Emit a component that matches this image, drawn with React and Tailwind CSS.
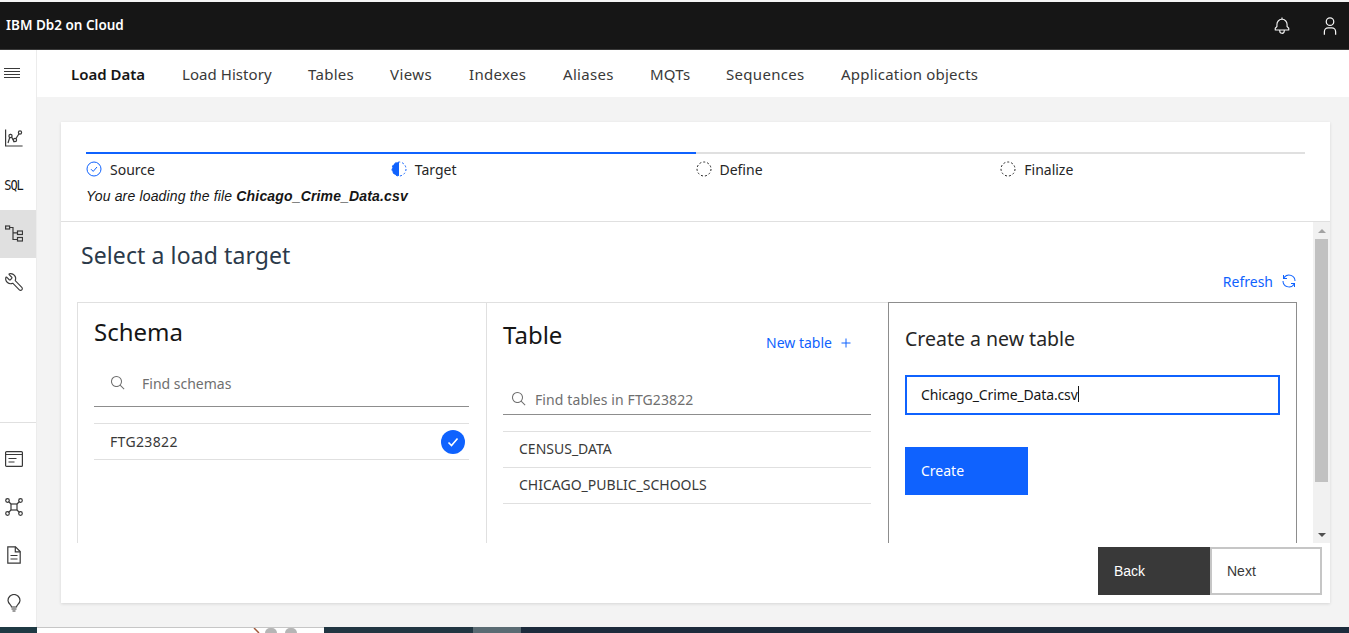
import { Wrench } from "lucide-react";

const font = { fontFamily: '"Noto Sans", "Liberation Sans", sans-serif' };
const arial = { fontFamily: '"Liberation Sans", sans-serif' };

const SideItem = ({ children, active }) => (
  <div className={`h-12 flex items-center justify-center pr-[9px] text-[#393939] ${active ? "bg-[#e0e0e0]" : ""}`}>{children}</div>
);

const Step = ({ icon, label }) => (
  <div className="flex-1 flex items-center gap-[8px] h-[30px] text-[14px] text-[#262626]">
    {icon}
    <span>{label}</span>
  </div>
);

const Dashed = () => (
  <svg width="16" height="16" viewBox="0 0 16 16">
    <circle cx="8" cy="8" r="7" fill="none" stroke="#262626" strokeWidth="1" strokeDasharray="2 2" />
  </svg>
);

const Search = () => (
  <svg width="16" height="16" viewBox="0 0 32 32" fill="#6f6f6f">
    <path d="M29,27.5859l-7.5521-7.5521a11.0177,11.0177,0,1,0-1.4141,1.4141L27.5859,29ZM4,13a9,9,0,1,1,9,9A9.01,9.01,0,0,1,4,13Z" />
  </svg>
);

const tabs = [
  { label: "Load History", width: "w-[90px] tracking-[0.05px]" },
  { label: "Tables", width: "w-[46px] tracking-[0.3px]" },
  { label: "Views", width: "w-[43px] tracking-[0.4px]" },
  { label: "Indexes", width: "w-[58px] tracking-[0.3px]" },
  { label: "Aliases", width: "w-[51px] tracking-[0.3px]" },
  { label: "MQTs", width: "w-[40px] tracking-[0.2px]" },
  { label: "Sequences", width: "w-[79px] tracking-[0.3px]" },
  { label: "Application objects", width: "w-[137px] tracking-[0.2px]" },
];

export default function App() {
  return (
    <div style={font} className="w-[1349px] h-[633px] overflow-hidden flex flex-col bg-[#f3f3f3]">
      <div className="h-[2px] bg-[#f4f4f4] shrink-0" />
      <header className="h-[48px] shrink-0 bg-[#161616] border-b border-[#393939] flex items-center pl-[6px] text-white">
        <span className="text-[13.5px] font-semibold">IBM Db2 on Cloud</span>
        <div className="ml-auto flex items-center gap-[29px] pr-[9px] text-[#f4f4f4]">
          <svg width="18" height="18" viewBox="0 0 32 32" fill="currentColor">
            <path d="M28.7071,19.293,26,16.5859V13a10.0136,10.0136,0,0,0-9-9.9492V1H15V3.0508A10.0136,10.0136,0,0,0,6,13v3.5859L3.2929,19.293A1,1,0,0,0,3,20v3a1,1,0,0,0,1,1h7v.7768a5.152,5.152,0,0,0,4.5,5.1987A5.0057,5.0057,0,0,0,21,25V24h7a1,1,0,0,0,1-1V20A1,1,0,0,0,28.7071,19.293ZM19,25a3,3,0,0,1-6,0V24h6Zm8-3H5V20.4141L7.707,17.707A1,1,0,0,0,8,17V13a8,8,0,0,1,16,0v4a1,1,0,0,0,.293.707L27,20.4141Z" />
          </svg>
          <svg width="20" height="20" viewBox="0 0 32 32" fill="currentColor">
            <path d="M16,4a5,5,0,1,1-5,5,5,5,0,0,1,5-5m0-2a7,7,0,1,0,7,7A7,7,0,0,0,16,2Z" />
            <path d="M26,30H24V25a5,5,0,0,0-5-5H13a5,5,0,0,0-5,5v5H6V25a7,7,0,0,1,7-7h6a7,7,0,0,1,7,7Z" />
          </svg>
        </div>
      </header>

      <div className="flex-1 min-h-0 flex">
        <aside className="w-[37px] shrink-0 bg-white border-r border-[#ececec] flex flex-col">
          <div className="h-[47px] flex items-center pl-[4px] text-[#393939]">
            <svg width="16" height="12" viewBox="0 0 16 12" stroke="currentColor" strokeWidth="1"><path d="M0 .5h16M0 3.500h16M0 6.500h16M0 9.500h16" /></svg>
          </div>
          <div className="h-[17px]" />
          <SideItem>
            <svg width="18" height="18" viewBox="0 0 18 18" fill="none" stroke="currentColor" strokeWidth="1.200">
              <path d="M.6 .5v16.500h17" />
              <path d="M3 14 5.500 6l3.500 6.500L14.500 4" />
              <circle cx="5.500" cy="7" r="1.600" fill="white" /><circle cx="10" cy="11" r="1.600" fill="white" /><circle cx="15" cy="3.500" r="1.600" fill="white" />
            </svg>
          </SideItem>
          <SideItem>
            <span className="text-[12px] font-normal tracking-[-1px] text-[#161616] scale-y-110" style={{ fontFamily: '"DejaVu Sans Mono", monospace' }}>SQL</span>
          </SideItem>
          <SideItem active>
            <svg width="18" height="18" viewBox="0 0 18 18" fill="none" stroke="currentColor" strokeWidth="1.200">
              <rect x=".6" y="1" width="4" height="3" /><rect x="12.500" y="6" width="5" height="3.500" /><rect x="12.500" y="12.500" width="5" height="3.500" />
              <path d="M4.500 2.500h3.500v12h4.500M8 7.800h4.500" />
            </svg>
          </SideItem>
          <SideItem>
            <Wrench size={20} strokeWidth={1.300} className="-scale-x-100" />
          </SideItem>
          <div className="h-[116px]" />
          <div className="h-[13px] border-t border-[#e0e0e0]" />
          <SideItem>
            <svg width="18" height="16" viewBox="0 0 18 16" fill="none" stroke="currentColor" strokeWidth="1.200">
              <rect x=".6" y=".6" width="16.800" height="14.800" rx="1" /><path d="M.6 3.500h16.800M3.500 7.500h8M3.500 11h6" />
            </svg>
          </SideItem>
          <SideItem>
            <svg width="18" height="18" viewBox="0 0 18 18" fill="none" stroke="currentColor" strokeWidth="1.200">
              <rect x="6" y="6" width="6" height="6" />
              <path d="M6 6 3.500 3.500M12 6l2.500-2.500M6 12l-2.500 2.500M12 12l2.500 2.500" />
              <circle cx="2.500" cy="2.500" r="1.800" /><circle cx="15.500" cy="2.500" r="1.800" /><circle cx="2.500" cy="15.500" r="1.800" /><circle cx="15.500" cy="15.500" r="1.800" />
            </svg>
          </SideItem>
          <SideItem>
            <svg width="14" height="18" viewBox="0 0 14 18" fill="none" stroke="currentColor" strokeWidth="1.200">
              <path d="M.8 .8h7.700l4.700 4.700v11.700H.8Z" /><path d="M8.300 .8v5h4.900M3.500 9.500h7M3.500 13h7" />
            </svg>
          </SideItem>
          <SideItem>
            <svg width="14" height="18" viewBox="0 0 14 18" fill="none" stroke="currentColor" strokeWidth="1.200">
              <path d="M4.500 13c0-2-3.500-3.500-3.500-6.500a6 6 0 0 1 12 0c0 3-3.500 4.500-3.500 6.500Z" /><path d="M4.500 15h5M5.500 17h3" />
            </svg>
          </SideItem>
        </aside>

        <main className="flex-1 min-w-0 flex flex-col">
          <nav className="h-[47px] shrink-0 bg-white flex items-center pt-[2px] pl-[34px] gap-[36px] text-[15px] text-[#393939] whitespace-nowrap">
            <span className="w-[75px] font-semibold text-[#161616]">Load Data</span>
            {tabs.map((t) => <span key={t.label} className={t.width}>{t.label}</span>)}
          </nav>

          <section className="ml-[24px] mt-[25px] w-[1269px] h-[481px] bg-white shadow-[0_1px_3px_rgba(0,0,0,0.12)] flex flex-col">
            <div className="h-[100px] shrink-0 border-b border-[#e0e0e0] px-[25px] pt-[30px]">
              <div className="h-[2px] bg-[#e0e0e0] flex"><div className="w-[610px] bg-[#0f62fe]" /></div>
              <div className="flex">
                <Step label="Source" icon={
                  <svg width="16" height="16" viewBox="0 0 16 16" fill="none" stroke="#0f62fe"><circle cx="8" cy="8" r="7" /><path d="m5 8.200 2.200 2.200L11 6" /></svg>
                } />
                <Step label="Target" icon={
                  <svg width="16" height="16" viewBox="0 0 16 16"><path d="M8 1a7 7 0 0 0 0 14Z" fill="#0f62fe" /><circle cx="8" cy="8" r="7" fill="none" stroke="#0f62fe" strokeDasharray="2 2" /></svg>
                } />
                <Step label="Define" icon={<Dashed />} />
                <Step label="Finalize" icon={<Dashed />} />
              </div>
              <p className="mt-[3px] text-[14px] italic tracking-[0.16px] text-[#161616] leading-[18px]" style={arial}>
                You are loading the file <b>Chicago_Crime_Data.csv</b>
              </p>
            </div>

            <div className="h-[321px] shrink-0 flex overflow-hidden">
              <div className="flex-1 min-w-0 px-[16px] flex flex-col">
                <h2 className="pl-[4px] mt-[15px] h-[36px] leading-[36px] text-[23px] tracking-[0.1px] text-[#2b3a4a]">Select a load target</h2>
                <div className="mt-[-2px] h-[20px] flex items-center justify-end gap-[8px] text-[#0f62fe] text-[14px]">
                  <span>Refresh</span>
                  <svg width="16" height="16" viewBox="0 0 32 32" fill="currentColor">
                    <path d="M12 10H6.780A11 11 0 0 1 27 16h2A13 13 0 0 0 6 7.680V4H4v8h8zM20 22h5.220A11 11 0 0 1 5 16H3a13 13 0 0 0 23 8.320V28h2V20H20z" />
                  </svg>
                </div>
                <div className="mt-[11px] flex-1 min-h-0 flex w-[1220px]">
                  <div className="w-[410px] shrink-0 border border-b-0 border-[#e0e0e0] pl-[16px] pr-[17px] pt-[14px]">
                    <h3 className="text-[24px] leading-[30px] text-[#161616]">Schema</h3>
                    <div className="mt-[15px] h-[45px] pb-[2px] border-b border-[#8d8d8d] flex items-center pl-[16px] gap-[16px] text-[14px] text-[#6f6f6f]">
                      <Search /><span>Find schemas</span>
                    </div>
                    <div className="mt-[16px] h-[37px] border-y border-[#e0e0e0] flex items-center justify-between pl-[16px] pr-[4px] text-[14px] text-[#393939]">
                      <span className="tracking-[0.35px]">FTG23822</span>
                      <div className="w-[24px] h-[24px] rounded-full bg-[#0f62fe] flex items-center justify-center">
                        <svg width="12" height="12" viewBox="0 0 12 12" fill="none" stroke="white" strokeWidth="1.600"><path d="m1.500 6.500 3 3 6-7" /></svg>
                      </div>
                    </div>
                  </div>
                  <div className="w-[401px] shrink-0 border-t border-[#e0e0e0] px-[16px] pt-[17px]">
                    <div className="flex items-start justify-between pr-[20px] w-[368px]">
                      <h3 className="text-[24px] leading-[30px] text-[#161616]">Table</h3>
                      <div className="mt-[12px] flex items-center gap-[9px] text-[14px] text-[#0f62fe]">
                        <span>New table</span>
                        <svg width="10" height="10" viewBox="0 0 10 10" stroke="currentColor"><path d="M5 .5v9M.5 5h9" /></svg>
                      </div>
                    </div>
                    <div className="mt-[29px] w-[368px] h-[33px] pt-[2px] border-b border-[#8d8d8d] flex items-center pl-[8px] gap-[8px] text-[14px] tracking-[0.1px] text-[#6f6f6f]">
                      <Search /><span>Find tables in FTG23822</span>
                    </div>
                    <div className="mt-[16px] w-[368px] border-t border-[#e0e0e0] text-[14px] text-[#393939]">
                      <div className="h-[36px] pb-[2px] border-b border-[#e0e0e0] flex items-center pl-[16px]">CENSUS_DATA</div>
                      <div className="h-[36px] pb-[2px] border-b border-[#e0e0e0] flex items-center pl-[16px]">CHICAGO_PUBLIC_SCHOOLS</div>
                    </div>
                  </div>
                  <div className="w-[409px] shrink-0 border border-b-0 border-[#8d8d8d] pl-[16px] pt-[23px]">
                    <h3 className="text-[19.5px] leading-[26px] text-[#262626]">Create a new table</h3>
                    <div className="mt-[23px] w-[375px] h-[40px] pb-[2px] border-2 border-[#0f62fe] flex items-center pl-[14px] text-[14px] tracking-[-0.14px] text-[#161616]">
                      <span>Chicago_Crime_Data.csv</span><span className="w-px h-[16px] bg-[#161616]" />
                    </div>
                    <div className="mt-[32px] w-[123px] h-[48px] pb-[2px] bg-[#0f62fe] text-white text-[14px] flex items-center pl-[16px]">Create</div>
                  </div>
                </div>
              </div>
              <div className="w-[17px] shrink-0 bg-[#f1f1f1] flex flex-col items-center">
                <div className="h-[17px] flex items-center justify-center">
                  <div className="w-0 h-0 border-x-[4px] border-x-transparent border-b-[4px] border-b-[#a3a3a3]" />
                </div>
                <div className="w-[13px] h-[243px] bg-[#c1c1c1]" />
                <div className="mt-auto h-[17px] flex items-center justify-center">
                  <div className="w-0 h-0 border-x-[4px] border-x-transparent border-t-[4px] border-t-[#505050]" />
                </div>
              </div>
            </div>

            <div className="flex justify-end pt-[4px] pr-[8px] text-[14px]" style={arial}>
              <div className="w-[112px] h-[48px] bg-[#393939] text-white flex items-center pl-[16px]">Back</div>
              <div className="w-[112px] h-[48px] bg-white border-2 border-[#c6c6c6] text-[#393939] flex items-center pl-[15px]">Next</div>
            </div>
          </section>
        </main>
      </div>

      <div className="h-[6px] shrink-0 flex bg-[#1c2b3c]">
        <div className="w-[37px] bg-[#1f3a44]" />
        <div className="w-[287px] bg-white border-t border-[#c6c6c6] flex items-end pl-[216px]">
          <svg width="10" height="5" viewBox="0 0 10 5" stroke="#a0583a" strokeWidth="1.500"><path d="M1 0l5 5" /></svg>
          <div className="ml-[2px] w-[12px] h-[5px] rounded-t-full bg-[#b5b5b5]" />
          <div className="ml-[8px] w-[12px] h-[5px] rounded-t-full bg-[#b5b5b5]" />
        </div>
        <div className="w-[149px] bg-[#213642]" />
        <div className="w-[48px] bg-[#5a6b73]" />
        <div className="flex-1 bg-[#1c2b3c]" />
      </div>
    </div>
  );
}
